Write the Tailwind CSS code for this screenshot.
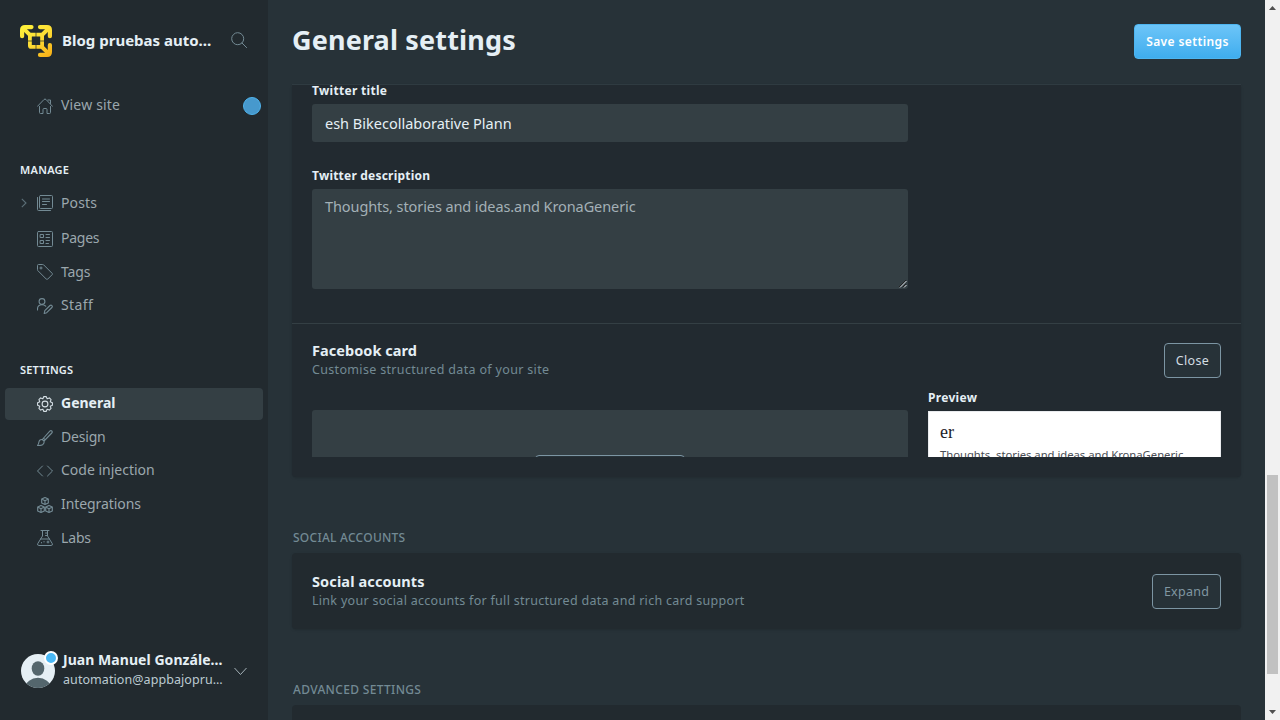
<!DOCTYPE html>
<html lang="en">
<head>
<meta charset="utf-8">
<title>General settings</title>
<script src="https://cdn.jsdelivr.net/npm/@tailwindcss/browser@4"></script>
</head>
<body class="flex h-[720px] w-[1280px] overflow-hidden bg-[#273238] font-['Noto_Sans','Open_Sans',sans-serif] whitespace-nowrap">

<nav class="flex h-full w-[268px] shrink-0 flex-col bg-[#222a2f] text-[14px] leading-5 text-[#9ba7ad]">
  <header class="flex h-[82px] shrink-0 items-center pl-5">
    <svg class="size-8" viewBox="0 0 32 32" fill="none">
      <defs><linearGradient id="logo" x1="4" y1="2" x2="26" y2="32" gradientUnits="userSpaceOnUse"><stop stop-color="#fff03a"/><stop offset=".5" stop-color="#fddc35"/><stop offset="1" stop-color="#f8b41a"/></linearGradient></defs>
      <g stroke="url(#logo)" stroke-width="4.200" stroke-linecap="round" stroke-linejoin="round">
        <path d="M11.500 2.100H5Q2.100 2.100 2.100 5v6.200M20 2.100h7Q29.900 2.100 29.900 5v6.200M29.900 20V27q0 2.900-2.900 2.900h-7"/>
        <path d="M3.500 3.500l6.500 6.500M28.500 3.500l-6.500 6.500M28.500 28.500l-6.500-6.500" stroke-width="3.900"/>
      </g>
      <rect x="9.900" y="9.700" width="12.200" height="12.200" rx="1.200" stroke="url(#logo)" stroke-width="3.800"/>
      <path d="M16 7v5M16 20v5M7 16h5M20 16h5" stroke="#222a2f" stroke-width=".7"/>
    </svg>
    <span class="-mt-0.5 ml-[10px] w-[169px] text-[15px] font-bold text-[#e5eff5]">Blog pruebas auto…</span>
    <svg class="mb-[3px] size-4" viewBox="0 0 16 16" fill="none" stroke="#738a94"><circle cx="6.700" cy="6.700" r="6"/><path d="M11 11l4.600 4.600" stroke-linecap="round"/></svg>
  </header>

  <a class="mt-[7px] flex h-[33px] items-center pr-[7px] pl-[37px]">
    <svg class="mt-px size-4" viewBox="0 0 16 16" fill="none" stroke="#738a94" stroke-linecap="round" stroke-linejoin="round"><path d="M.5 8.300L7 1.500q1-1 2 0l6.500 6.800M2.500 8.500v6q0 1 1 1H6v-4q0-1 1-1h2q1 0 1 1v4h2.500q1 0 1-1v-6M11 2h2.500v3.500"/></svg>
    <span class="-mt-0.5 ml-2 tracking-[0.18px]">View site</span>
    <i class="ml-auto size-[18px] rounded-full border border-[#4fb3ec] bg-[#4799cd]"></i>
  </a>

  <h4 class="mt-10 h-4 pl-5 text-[11px] leading-4 font-semibold tracking-[0.27px] text-[#e5eff5]">MANAGE</h4>
  <ul class="mt-[9px]">
    <li class="mb-[3px] flex h-8 items-center pl-[21px]">
      <svg class="h-[10px] w-[6px]" viewBox="0 0 6 10" fill="none" stroke="#5c6f78" stroke-width="1.100"><path d="M.8.8L5 5 .8 9.200"/></svg>
      <svg class="ml-[10px] size-4" viewBox="0 0 16 16" fill="none" stroke="#738a94" stroke-linecap="round"><rect x="2.500" y=".5" width="13" height="13" rx="1"/><path d="M.5 2.500v12q0 1 1 1h12M5.500 4h7M5.500 6.500h7M5.500 9.500h4"/></svg>
      <span class="ml-2 tracking-[0.15px]">Posts</span>
    </li>
    <li class="mb-[1.6px] flex h-8 items-center pl-[37px]">
      <svg class="mt-px size-4" viewBox="0 0 16 16" fill="none" stroke="#738a94" stroke-linecap="round"><rect x=".5" y=".5" width="15" height="15" rx="1"/><path d="M3.500 3.500h3v3h-3zM3.500 9.500h3v3h-3zM9 3.500h3.500M9 6.500h3.500M9 9.500h3.500M9 12.500h2.500"/></svg>
      <span class="ml-2 tracking-[-0.24px]">Pages</span>
    </li>
    <li class="mb-[1.6px] flex h-8 items-center pl-[37px]">
      <svg class="mt-px size-4" viewBox="0 0 16 16" fill="none" stroke="#738a94" stroke-linejoin="round"><path d="M.5 1.500q0-1 1-1h4.200q.6 0 1 .4l8.500 8.500q.6.600 0 1.200l-4.600 4.600q-.6.600-1.200 0L.9 6.700q-.4-.4-.4-1z"/><circle cx="4" cy="4" r="1"/></svg>
      <span class="ml-2 tracking-[-0.1px]">Tags</span>
    </li>
    <li class="flex h-8 items-center pl-[37px]">
      <svg class="mt-px size-4" viewBox="0 0 16 16" fill="none" stroke="#738a94" stroke-width="1.100" stroke-linecap="round" stroke-linejoin="round"><circle cx="5" cy="3.500" r="2.900"/><path d="M.5 12V11q0-4.200 4.500-4.200 2.600 0 3.700 1.400M7.800 12.700l5.200-5.200q1-.8 1.900.1t0 1.900l-5.200 5.200-2.500.8z"/></svg>
      <span class="ml-2 tracking-[0.4px]">Staff</span>
    </li>
  </ul>

  <h4 class="mt-[41px] h-4 pl-5 text-[11px] leading-4 font-semibold tracking-[0.18px] text-[#e5eff5]">SETTINGS</h4>
  <ul class="mt-[9.600px] flex flex-col gap-[1.6px]">
    <li class="mr-[5px] ml-[5px] flex h-8 items-center rounded bg-[#343f44] pl-8 font-bold text-[#e5eff5]">
      <svg class="size-4" viewBox="0 0 16 16" fill="none" stroke="#d5dfe5" stroke-width="1.100" stroke-linejoin="round"><circle cx="8" cy="8" r="2.900"/><path d="M6.830.59h2.340L10.140 2.830 12.410 1.930 14.070 3.590 13.170 5.860 15.410 6.830v2.340L13.170 10.140 14.070 12.410 12.410 14.070 10.140 13.170 9.170 15.410H6.830L5.860 13.170 3.590 14.070 1.930 12.410 2.830 10.140.59 9.170V6.830L2.830 5.860 1.930 3.590 3.590 1.930 5.860 2.830z"/></svg>
      <span class="-mt-0.5 ml-2">General</span>
    </li>
    <li class="flex h-8 items-center pl-[37px]">
      <svg class="mt-px size-4" viewBox="0 0 16 16" fill="none" stroke="#738a94" stroke-width="1.100" stroke-linecap="round" stroke-linejoin="round"><path d="M5.300 9.500L12.800 1.200q1-1 2-.2.900.9 0 2L7 11M5.300 9.500Q2.300 9.300 1.900 12 1.700 14.200.5 15.500q3.300.2 5-.8Q7.600 13.300 7 11zM6.500 8.200l1.700 1.600"/></svg>
      <span class="-mt-px ml-2 tracking-[-0.2px]">Design</span>
    </li>
    <li class="flex h-8 items-center pl-[37px]">
      <svg class="size-4" viewBox="0 0 16 16" fill="none" stroke="#738a94" stroke-linecap="round" stroke-linejoin="round"><path d="M5.500 3L.5 8l5 5M10.500 3l5 5-5 5"/></svg>
      <span class="-mt-px ml-2">Code injection</span>
    </li>
    <li class="flex h-8 items-center pl-[37px]">
      <svg class="mt-px size-4" viewBox="0 0 16 16" fill="none" stroke="#738a94" stroke-width="1.150" stroke-linejoin="round"><path id="cube" d="M8 .5l3.300 1.600v3.800L8 7.500 4.700 5.900V2.100zM4.700 2.100L8 3.700l3.300-1.600M8 3.700v3.800"/><use href="#cube" x="-4" y="8"/><use href="#cube" x="4" y="8"/></svg>
      <span class="-mt-px ml-2 tracking-[-0.07px]">Integrations</span>
    </li>
    <li class="flex h-8 items-center pl-[37px]">
      <svg class="size-4" viewBox="0 0 16 16" fill="none" stroke="#738a94" stroke-linecap="round" stroke-linejoin="round"><path d="M4 .5h8M5.500.5v5.500L.8 13.500q-.8 2 1 2h12.400q1.800 0 1-2L10.500 6V.5M3.500 9h9M8.500 3h2M8.500 5.500h2M10 12h2M11 11v2M4.500 12.500v.4M7 11.500v.5"/></svg>
      <span class="-mt-px ml-2 tracking-[-0.15px]">Labs</span>
    </li>
  </ul>

  <footer class="mt-auto mb-[30px] flex h-[38px] items-center pl-[21px]">
    <div class="relative size-[34px]">
      <svg class="size-[34px]" viewBox="0 0 34 34"><defs><clipPath id="av"><circle cx="17" cy="17" r="17"/></clipPath></defs><g clip-path="url(#av)"><path fill="#e5eff5" d="M0 0h34v34H0z"/><ellipse cx="17" cy="14.500" rx="6.300" ry="7.300" fill="#54666d"/><ellipse cx="17" cy="33.500" rx="12.500" ry="9.700" fill="#54666d"/></g></svg>
      <i class="absolute -top-[3px] left-[23px] size-[14px] rounded-full border-2 border-white bg-[#4ab8f5]"></i>
    </div>
    <div class="-mt-px ml-2 w-[171px]">
      <div class="leading-[18px] font-bold tracking-[0.05px] text-[#e5eff5]">Juan Manuel Gonzále…</div>
      <div class="text-[12.5px] leading-[22px] tracking-[0.07px] text-[#bccad2]">automation@appbajopru…</div>
    </div>
    <svg class="h-[9px] w-[13px]" viewBox="0 0 13 9" fill="none" stroke="#a5b1b7"><path d="M.5 1l6 6.500 6-6.500"/></svg>
  </footer>
</nav>

<main class="flex h-full w-[997px] shrink-0 flex-col overflow-hidden px-6">
  <header class="flex h-[85px] shrink-0 items-start justify-between border-b border-[#303c42] pt-6">
    <h1 class="text-[27px] leading-8 font-bold tracking-[0.15px] text-[#e5eff5]">General settings</h1>
    <button class="h-[35px] w-[107px] rounded border border-[#4db5f0] bg-linear-to-b from-[#6cc5f8] to-[#3eadee] text-[12px] font-semibold tracking-[0.4px] text-white">Save settings</button>
  </header>

  <section class="h-[392px] shrink-0 rounded-b bg-[#222a30] shadow-sm">
    <div class="h-[239px] border-b border-[#343f44] px-5">
      <label class="block h-[19px] text-[12px] leading-[12px] font-bold tracking-[0.3px] text-[#e5eff5]">Twitter title</label>
      <div class="h-[38px] w-[596px] rounded-[3px] bg-[#343f44] pl-[13px] text-[14.5px] leading-[39px] text-[#e5eff5]">esh Bikecollaborative Plann</div>
      <label class="mt-6 block h-[23px] text-[12px] leading-[20px] font-bold tracking-[0.21px] text-[#e5eff5]">Twitter description</label>
      <div class="flex h-[100px] w-[596px] justify-between rounded-[3px] bg-[#343f44] pl-[13px] text-[14.5px] leading-[34px] tracking-[-0.09px] text-[#a3b0b6]">
        <span>Thoughts, stories and ideas.and KronaGeneric</span>
        <svg class="mr-[1px] mb-[1px] size-2 self-end" viewBox="0 0 8 8" stroke-width="1"><path d="M0 7l7-7M4 7l3-3" stroke="#222"/><path d="M1 7.500L7.500 1M5 7.500L7.500 5" stroke="#dde3e6"/></svg>
      </div>
    </div>
    <div class="flex h-[133px] flex-col overflow-hidden px-5 pt-[18px]">
      <div class="flex h-[48px] shrink-0 justify-between">
        <div>
          <h3 class="text-[14.5px] leading-[17px] font-bold tracking-[0.05px] text-[#e5eff5]">Facebook card</h3>
          <p class="text-[12.5px] leading-[22px] tracking-[0.33px] text-[#738a94]">Customise structured data of your site</p>
        </div>
        <button class="mt-px h-[35px] w-[57px] rounded border border-[#7c95a3] bg-[#273238] pt-0.5 text-[12.5px] tracking-[0.32px] text-[#d3dde2]">Close</button>
      </div>
      <div class="flex h-[68px] shrink-0 gap-5">
        <div class="mt-[20px] flex h-[80px] w-[596px] justify-center rounded-t-[3px] bg-[#343f44] pt-[45px]">
          <div class="h-[35px] w-[150px] rounded border border-[#7c95a3] bg-[#273238]"></div>
        </div>
        <div class="w-[293px]">
          <h4 class="h-[21px] text-[12px] leading-[16px] font-bold tracking-[0.31px] text-[#e5eff5]">Preview</h4>
          <div class="h-[80px] border border-[#e9ebee] bg-white pt-[9px] pl-[11px]">
            <div class="font-['Liberation_Serif',serif] text-[18px] leading-[22px] text-[#1d2129]">er</div>
            <div class="mt-[2px] text-[11.3px] leading-[20px] tracking-[-0.04px] text-[#4b4f56]">Thoughts, stories and ideas.and KronaGeneric</div>
          </div>
        </div>
      </div>
    </div>
  </section>

  <h2 class="mt-[52px] h-[24px] shrink-0 pl-px text-[12px] leading-[18px] font-medium tracking-[0.26px] text-[#738a94]">SOCIAL ACCOUNTS</h2>
  <section class="flex h-[76px] shrink-0 justify-between rounded bg-[#222a2f] px-5 pt-[20px] shadow-sm">
    <div>
      <h3 class="text-[14.5px] leading-[17px] font-bold tracking-[0.12px] text-[#e5eff5]">Social accounts</h3>
      <p class="text-[12.5px] leading-[22px] tracking-[0.29px] text-[#738a94]">Link your social accounts for full structured data and rich card support</p>
    </div>
    <button class="mt-px h-[35px] w-[69px] rounded border border-[#7c95a3] bg-[#273238] pt-0.5 text-[12.5px] tracking-[0.26px] text-[#8097a2]">Expand</button>
  </section>

  <h2 class="mt-[52px] h-[24px] shrink-0 pl-px text-[12px] leading-[18px] font-medium tracking-[0.33px] text-[#738a94]">ADVANCED SETTINGS</h2>
  <section class="h-[76px] shrink-0 rounded bg-[#222a2f]"></section>
</main>

<aside class="flex h-full w-[15px] shrink-0 flex-col items-center bg-[#f1f1f1]">
  <svg class="mt-[6px] h-1 w-[7px]" viewBox="0 0 7 4"><path d="M3.500 0L7 4H0z" fill="#505050"/></svg>
  <div class="mt-[465px] h-[199px] w-[11px] bg-[#c1c1c1]"></div>
  <svg class="mt-auto mb-[6px] h-1 w-[7px]" viewBox="0 0 7 4"><path d="M0 0h7L3.500 4z" fill="#505050"/></svg>
</aside>
</body>
</html>
